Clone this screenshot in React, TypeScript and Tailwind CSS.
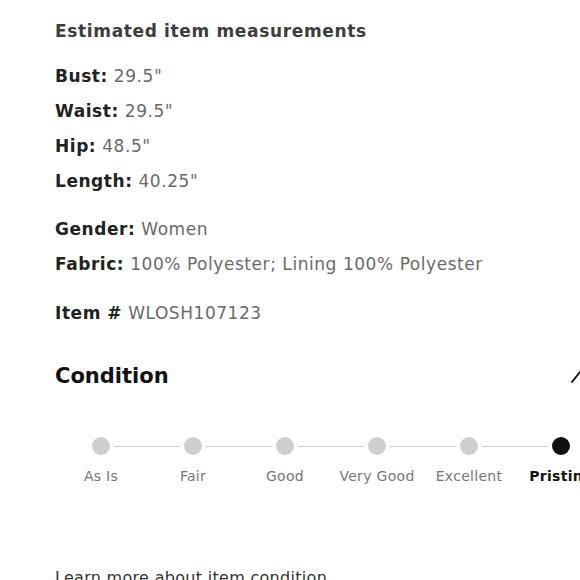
import React from 'react';

const measurements = [
  { label: 'Bust:', value: '29.5"' },
  { label: 'Waist:', value: '29.5"' },
  { label: 'Hip:', value: '48.5"' },
  { label: 'Length:', value: '40.25"' },
];

const steps = ['As Is', 'Fair', 'Good', 'Very Good', 'Excellent', 'Pristine'];
const current = 5;

const Row = ({ label, value }: { label: string; value: string }) => (
  <p className="text-[17px] leading-[24px] whitespace-nowrap tracking-[0.55px]">
    <span className="font-bold text-[#222]">{label}</span>{' '}
    <span className="text-[#6a6a6a]">{value}</span>
  </p>
);

const App = () => {
  return (
    <div className="w-[580px] h-[580px] overflow-hidden bg-white font-['DejaVu_Sans',sans-serif]">
      <div className="pl-[55px] pt-[19px] flex flex-col">
        <h3 className="text-[17px] leading-[24px] font-bold tracking-[0.65px] text-[#3d3d3d]">Estimated item measurements</h3>

        <div className="mt-[21px] flex flex-col gap-[11px]">
          {measurements.map((m) => (
            <Row key={m.label} label={m.label} value={m.value} />
          ))}
        </div>

        <div className="mt-[24px] flex flex-col gap-[11px]">
          <Row label="Gender:" value="Women" />
          <Row label="Fabric:" value="100% Polyester; Lining 100% Polyester" />
        </div>

        <div className="mt-[25px]">
          <Row label="Item #" value="WLOSH107123" />
        </div>

        {/* Condition header */}
        <div className="mt-[36px] w-[535px] flex items-center justify-between">
          <h2 className="text-[21px] leading-[30px] font-bold text-[#111]">Condition</h2>
          <svg width="20" height="20" viewBox="0 0 20 20" fill="none" stroke="#111" strokeWidth="2" strokeLinecap="round" strokeLinejoin="round">
            <polyline points="2,16 10,6 18,16" />
          </svg>
        </div>

        {/* Stepper */}
        <div className="mt-[46px] flex w-[552px]">
          {steps.map((s, i) => (
            <div key={s} className="w-[92px] shrink-0 flex items-center">
              <div className={`flex-1 h-px mr-[4px] ${i === 0 ? 'bg-transparent' : 'bg-[#d0d0d0]'}`}></div>
              <div className={`w-[18px] h-[18px] rounded-full ${i === current ? 'bg-[#111]' : 'bg-[#cfcfcf]'}`}></div>
              <div className={`flex-1 h-px ml-[4px] ${i === steps.length - 1 ? 'bg-transparent' : 'bg-[#d0d0d0]'}`}></div>
            </div>
          ))}
        </div>
        <div className="mt-[11px] flex w-[552px]">
          {steps.map((s, i) => (
            <div
              key={s}
              className={`w-[92px] shrink-0 text-center text-[14px] leading-[20px] tracking-[0.3px] whitespace-nowrap ${i === current ? 'font-bold text-[#111]' : 'text-[#777]'}`}
            >
              {s}
            </div>
          ))}
        </div>

        <a className="mt-[80px] text-[16px] leading-[24px] tracking-[0.3px] text-[#333] underline whitespace-nowrap">
          Learn more about item condition
        </a>
      </div>
    </div>
  );
};

export default App;
